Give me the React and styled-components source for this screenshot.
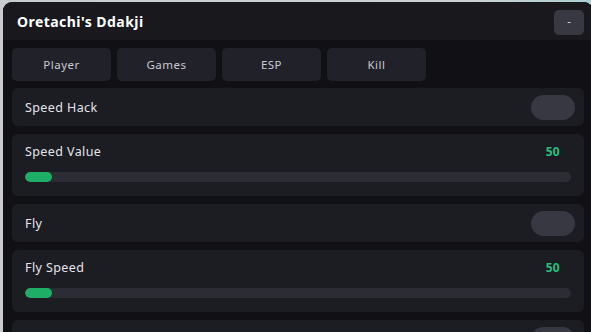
import React from "react";
import styled, { createGlobalStyle } from "styled-components";

const GlobalStyle = createGlobalStyle`
  html, body {
    margin: 0;
    padding: 0;
    width: 591px;
    height: 332px;
    overflow: hidden;
    background: linear-gradient(90deg, #c9cccf 0%, #cdd1d3 80%, #a9cfd2 100%);
    font-family: "Noto Sans", "Open Sans", sans-serif;
  }
`;

const tabs = ["Player", "Games", "ESP", "Kill"];

const rows = [
  { type: "toggle", label: "Speed Hack" },
  { type: "slider", label: "Speed Value", value: 50, fill: 5 },
  { type: "toggle", label: "Fly" },
  { type: "slider", label: "Fly Speed", value: 50, fill: 5 },
  { type: "toggle", label: "" },
];

function App() {
  return (
    <>
      <GlobalStyle />
      <Window>
        <Header>
          <Title>Oretachi's Ddakji</Title>
          <MinButton>-</MinButton>
        </Header>
        <Body>
          <TabBar>
            {tabs.map((t) => (
              <Tab key={t}>{t}</Tab>
            ))}
          </TabBar>
          {rows.map((r, i) =>
            r.type === "toggle" ? (
              <ToggleRow key={i}>
                <Label>{r.label}</Label>
                <Switch />
              </ToggleRow>
            ) : (
              <SliderRow key={i}>
                <SliderHead>
                  <Label>{r.label}</Label>
                  <Value>{r.value}</Value>
                </SliderHead>
                <Track>
                  <Fill style={{ width: `${r.fill}%` }} />
                </Track>
              </SliderRow>
            )
          )}
        </Body>
      </Window>
    </>
  );
}

export default App;

const Window = styled.div`
  margin: 2px 0 0 3px;
  width: 590px;
  height: 400px;
  border-radius: 9px;
  overflow: hidden;
  background: #111115;
  display: flex;
  flex-direction: column;
`;

const Header = styled.div`
  height: 38px;
  flex-shrink: 0;
  background: #18181d;
  display: flex;
  align-items: center;
  justify-content: space-between;
  padding: 0 9px 0 14px;
`;

const Title = styled.h1`
  margin: 0;
  color: #ffffff;
  font-size: 14px;
  font-weight: 700;
  letter-spacing: 0.45px;
`;

const MinButton = styled.button`
  width: 30px;
  height: 25px;
  border: none;
  border-radius: 5px;
  background: #383842;
  color: #e6e6ea;
  font-family: inherit;
  font-size: 11px;
  padding: 0 0 3px;
  margin-top: 2px;
`;

const Body = styled.div`
  padding: 8px 9px;
  display: flex;
  flex-direction: column;
  gap: 8px;
`;

const TabBar = styled.div`
  display: flex;
  gap: 6px;
  margin-bottom: -1px;
`;

const Tab = styled.div`
  width: 99px;
  height: 33px;
  border-radius: 5px;
  background: #212129;
  color: #c9c9d0;
  font-size: 11.5px;
  letter-spacing: 0.5px;
  display: flex;
  align-items: center;
  justify-content: center;
`;

const Card = styled.div`
  background: #1c1c23;
  border-radius: 6px;
  padding: 0 9px 0 13px;
`;

const ToggleRow = styled(Card)`
  height: 38px;
  display: flex;
  align-items: center;
  justify-content: space-between;
`;

const Label = styled.span`
  color: #e4e4ea;
  font-size: 12.5px;
  letter-spacing: 0.4px;
`;

const Switch = styled.div`
  width: 44px;
  height: 25px;
  border-radius: 13px;
  background: #383842;
`;

const SliderRow = styled(Card)`
  height: 62px;
  padding-top: 7px;
  padding-right: 13px;
  box-sizing: border-box;
`;

const SliderHead = styled.div`
  display: flex;
  align-items: center;
  justify-content: space-between;
  padding-right: 11px;
  height: 20px;
`;

const Value = styled.span`
  color: #22c07c;
  font-size: 12px;
  font-weight: 700;
  letter-spacing: 0.3px;
`;

const Track = styled.div`
  margin-top: 11px;
  height: 10px;
  border-radius: 5px;
  background: #2c2c35;
  overflow: hidden;
`;

const Fill = styled.div`
  height: 100%;
  border-radius: 5px;
  background: #1fae66;
`;
